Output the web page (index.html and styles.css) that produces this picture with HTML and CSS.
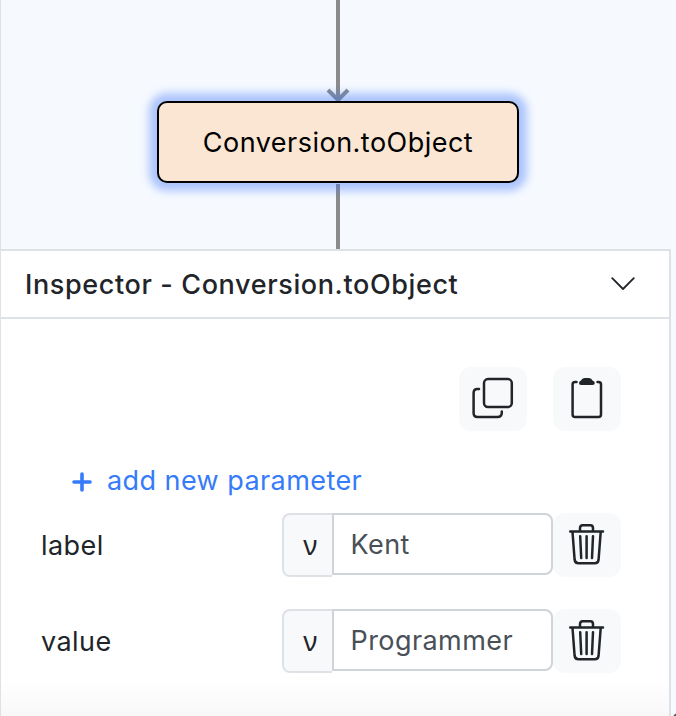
FILE: index.html
```html
<!DOCTYPE html>
<html lang="en">
<head>
<meta charset="utf-8">
<title>Inspector</title>
<link rel="stylesheet" href="styles.css">
</head>
<body>
<svg class="symbols" aria-hidden="true">
  <symbol id="trash" viewBox="0 0 40 44">
    <path d="M3.200 8.500H36M13 8V5.200Q13 2.200 15.500 2.200H23.500Q26 2.200 26 5.200V8M5.500 9 7.600 36.500Q8 40.300 11.500 40.300H27.600Q31.200 40.300 31.600 36.500L33.700 9M13.200 13.200 14.200 35M19.600 13.200V35M26 13.200 25 35" fill="none" stroke="currentColor" stroke-width="2.500" stroke-linecap="round"/>
  </symbol>
</svg>
<main class="app">
  <section class="canvas">
    <svg class="edges" viewBox="0 0 676 249">
      <path d="M338 0V100M338 184V249M328 90 338 100 348 90" fill="none" stroke="#8b8b8b" stroke-width="4"/>
    </svg>
    <div class="node"><span>Conversion.toObject</span></div>
  </section>
  <section class="inspector">
    <header class="header">
      <h1 class="title">Inspector - Conversion.toObject</h1>
      <svg class="chevron" viewBox="0 0 24 14"><path d="M1.200 1.200 12 12 22.800 1.200" fill="none" stroke="currentColor" stroke-width="1.800" stroke-linecap="round" stroke-linejoin="round"/></svg>
    </header>
    <div class="content">
      <div class="tools">
        <button class="icon-button" aria-label="Copy"><svg viewBox="0 0 68 64"><g fill="none" stroke="currentColor" stroke-width="2.500" stroke-linecap="round"><rect x="25" y="12.100" width="27.800" height="28" rx="4"/><path d="M20 22.100H18.500Q14.600 22.100 14.600 26V46Q14.600 50 18.500 50H38.500Q42.800 50 42.800 45.500V44.500"/></g></svg></button>
        <button class="icon-button" aria-label="Paste"><svg viewBox="0 0 68 64"><path d="M23.500 15H22Q19.600 15 19.600 17.500V47.500Q19.600 50 22 50H45.500Q48 50 48 47.500V17.500Q48 15 45.500 15H44.500" fill="none" stroke="currentColor" stroke-width="2.500" stroke-linecap="round"/><path d="M28 13.500Q29 11 31.500 11H36Q38.500 11 39.500 13.500Q41.800 14 41.800 16Q41.800 18 39.500 18H28Q26 18 26 16Q26 14 28 13.500Z" fill="currentColor"/></svg></button>
      </div>
      <div class="add"><svg class="plus" viewBox="0 0 20 20"><path d="M2 10H18M10 2V18" stroke="currentColor" stroke-width="3.600" stroke-linecap="round"/></svg><span class="add-text">add new parameter</span></div>
      <div class="row">
        <span class="label">label</span>
        <span class="kind">ν</span><span class="field">Kent</span>
        <button class="icon-button" aria-label="Delete label"><svg class="trash"><use href="#trash"/></svg></button>
      </div>
      <div class="row">
        <span class="label">value</span>
        <span class="kind">ν</span><span class="field">Programmer</span>
        <button class="icon-button" aria-label="Delete value"><svg class="trash"><use href="#trash"/></svg></button>
      </div>
    </div>
  </section>
  <i class="corner"></i>
</main>
</body>
</html>
```
FILE: styles.css
```css
* { box-sizing: border-box; }
body { margin: 0; font-family: Inter, "Liberation Sans", sans-serif; font-size: 27px; letter-spacing: .43px; color: #212529; }
.symbols { position: absolute; width: 0; height: 0; }
.app { position: relative; width: 676px; height: 716px; overflow: hidden; background: #f6faff; border-left: 1px solid #dee2e6; }
.canvas { position: relative; height: 249px; }
.edges { position: absolute; left: -1px; top: 0; width: 676px; height: 249px; }
.node { position: absolute; left: 156px; top: 101px; width: 362px; height: 82px; border: 2px solid #000; border-radius: 10px; background: #fae6d3; color: #000; box-shadow: 0 0 8px 8px rgba(61, 116, 248, .4); display: flex; align-items: center; justify-content: center; white-space: nowrap; letter-spacing: .48px; }
.inspector { width: 670px; height: 467px; border: 2px solid #dee2e6; border-left: 0; border-bottom: 0; background: linear-gradient(#fff 0, #fff 428px, #f8f8f8 465px); }
.header { height: 68px; border-bottom: 2px solid #dee2e6; display: flex; align-items: center; justify-content: space-between; padding: 0 34px 0 24px; }
.title { margin: 0; font-size: 27px; font-weight: 550; letter-spacing: .62px; line-height: 40px; padding-top: 1px; white-space: nowrap; }
.chevron { width: 24px; height: 14px; }
.content { padding: 48px 48px 0 40px; }
.tools { display: flex; justify-content: flex-end; gap: 26px; }
.icon-button { width: 68px; height: 64px; flex: none; padding: 0; border: 0; border-radius: 12px; background: #f8f9fa; color: #212529; display: flex; align-items: center; justify-content: center; }
.icon-button svg { width: 68px; height: 64px; }
.icon-button .trash { width: 40px; height: 44px; }
.add { height: 82px; padding: 30px 0 0 31px; display: flex; align-items: flex-start; color: #367bfa; line-height: 40px; }
.plus { width: 20px; height: 20px; margin: 11px 15px 0 0; }
.row { height: 64px; margin-bottom: 32px; display: flex; align-items: flex-start; line-height: 64px; }
.label { width: 241px; padding-top: 1px; }
.kind { width: 50px; height: 64px; border: 2px solid #dee2e6; border-right: 0; border-radius: 8px 0 0 8px; background: #f8f9fa; line-height: 59px; text-align: center; padding-left: 5px; font-family: "Noto Sans", sans-serif; font-size: 27px; }
.field { width: 221px; height: 62px; border: 2px solid #ced4da; border-radius: 0 8px 8px 0; background: #fff; color: #495057; padding-left: 16.5px; line-height: 59px; }
.corner { position: absolute; right: -7px; bottom: -7px; width: 10px; height: 10px; border: 2px solid #555; border-radius: 50%; }
```
